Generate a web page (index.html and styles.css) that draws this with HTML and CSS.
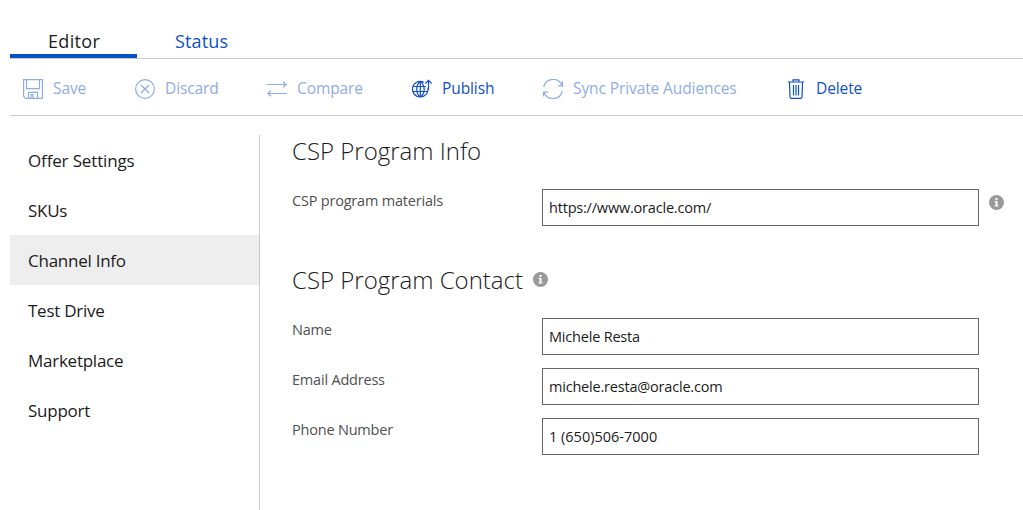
FILE: index.html
```html
<!DOCTYPE html>
<html lang="en">
<head>
<meta charset="utf-8">
<title>Channel Info</title>
<link rel="stylesheet" href="styles.css">
</head>
<body>
<div class="page">
  <nav class="tabs">
    <a class="tab tab-active"><span>Editor</span></a>
    <a class="tab"><span>Status</span></a>
  </nav>
  <div class="toolbar">
    <div class="tool disabled">
      <svg class="icon" viewBox="0 0 20 20"><path d="M.6.6h18.800v18.800H2.800L.6 17.200zM3.500.6v9h13v-9M5.500 19.400v-6h9v6M8 19v-3.500h2V19"/></svg>
      <span>Save</span>
    </div>
    <div class="tool disabled">
      <svg class="icon" viewBox="0 0 20 20"><circle cx="10" cy="10" r="9.400"/><path d="M6 6l8 8M14 6l-8 8"/></svg>
      <span>Discard</span>
    </div>
    <div class="tool disabled">
      <svg class="icon" viewBox="0 0 20 20"><path d="M0 5.500h19M16 2.800l3.200 2.700-3.200 2.700M20 14.500H1M4 11.800l-3.200 2.700 3.200 2.700"/></svg>
      <span>Compare</span>
    </div>
    <div class="tool">
      <svg class="icon" viewBox="0 0 20 20"><path d="M12 3.300A7.800 7.800 0 1 0 15.900 8.500M1 7.500H13.800M.7 12.500h15.200M8.300 2.500v15.600M8.300 2.500C3.500 6 3.500 14.600 8.300 18.100M8.300 2.500c1.900 1.200 3 2.800 3.500 5C12.800 12 11.300 16 8.300 18.100M16.500 11V1.500M13.300 4.500l3.200-3.200 3.200 3.200"/></svg>
      <span>Publish</span>
    </div>
    <div class="tool disabled">
      <svg class="icon" viewBox="0 0 20 20"><path d="M.7 8A9.600 9.600 0 0 1 19 6.500M19.400 2.500v4.300h-4.600M19.300 12A9.600 9.600 0 0 1 1 13.500M.6 17.500v-4.300h4.600"/></svg>
      <span>Sync Private Audiences</span>
    </div>
    <div class="tool delete">
      <svg class="icon" viewBox="0 0 20 20"><path d="M1 3h16M6 3V.8h6V3M2.500 3l.5 15q.1 1.300 1.300 1.300h9.400q1.200 0 1.300-1.300l.5-15M6.500 6v10.500M9 6v10.500M11.500 6v10.500"/></svg>
      <span>Delete</span>
    </div>
  </div>
  <div class="body">
    <nav class="side">
      <a class="offer">Offer Settings</a>
      <a>SKUs</a>
      <a class="selected">Channel Info</a>
      <a>Test Drive</a>
      <a>Marketplace</a>
      <a>Support</a>
    </nav>
    <main class="content">
      <h2>CSP Program Info</h2>
      <div class="row">
        <label for="materials">CSP program materials</label>
        <input id="materials" value="https://www.oracle.com/">
        <svg class="info" viewBox="0 0 15 15"><circle cx="7.500" cy="7.500" r="7.500"/><path d="M6.500 3h2v2h-2zM5.500 6h3v4.500h1v1h-4v-1h1V7h-1z"/></svg>
      </div>
      <h2 class="second"><span>CSP Program Contact</span>
        <svg class="info" viewBox="0 0 15 15"><circle cx="7.500" cy="7.500" r="7.500"/><path d="M6.500 3h2v2h-2zM5.500 6h3v4.500h1v1h-4v-1h1V7h-1z"/></svg>
      </h2>
      <div class="row">
        <label for="name">Name</label>
        <input id="name" value="Michele Resta">
      </div>
      <div class="row">
        <label for="email">Email Address</label>
        <input id="email" value="michele.resta@oracle.com">
      </div>
      <div class="row">
        <label for="phone">Phone Number</label>
        <input id="phone" class="phone" value="1 (650)506-7000">
      </div>
    </main>
  </div>
</div>
</body>
</html>
```
FILE: styles.css
```css
* { box-sizing: border-box; }
body {
  margin: 0;
  background: #fff;
  color: #1b1b1b;
  font-family: "Open Sans", "Noto Sans", sans-serif;
  overflow: hidden;
}
.page { height: 510px; padding: 24px 0 0 10px; display: flex; flex-direction: column; }
.tabs { display: flex; height: 35px; border-bottom: 1px solid #ccc; font-size: 18px; line-height: 34px; }
.tab { width: 127px; height: 34px; padding-left: 38px; color: #0f4fc8; letter-spacing: 0.150px; }
.tab-active { color: #1b1b1b; border-bottom: 4px solid #0451c4; }
.tab-active span { letter-spacing: 0.350px; }
.toolbar {
  display: grid;
  grid-template-columns: 112px 132px 145px 131px 244px 1fr;
  height: 57px;
  padding-left: 13px;
  align-items: center;
  border-bottom: 1px solid #ccc;
  font-size: 15.500px;
  letter-spacing: -0.100px;
}
.tool { display: flex; align-items: center; gap: 10px; height: 20px; color: #0f51c8; white-space: nowrap; margin-top: 4px; }
.tool span { margin-top: -2px; }
.disabled { color: #8fade5; }
.delete { gap: 9px; }
.icon { width: 20px; height: 20px; flex: none; fill: none; stroke: currentColor; stroke-width: 1.200; }
.body { display: flex; flex: 1; padding-top: 19px; min-height: 0; }
.side { width: 250px; border-right: 1px solid #ccc; font-size: 17px; }
.side a { display: block; height: 50px; line-height: 50px; padding: 1px 0 0 18px; letter-spacing: -0.250px; }
.side .offer { letter-spacing: -0.150px; }
.side .selected { background: #eee; }
.content { flex: 1; padding-left: 32px; }
h2 { display: flex; align-items: center; gap: 10px; height: 34px; margin: 0 0 20px; font-size: 24px; font-weight: 300; line-height: 32px; padding-bottom: 2px; white-space: nowrap; }
h2 .info { margin-bottom: 2px; }
.second { margin: 38px 0 20px; }
.row { display: flex; height: 37px; margin-bottom: 13px; }
.row label { width: 250px; font-size: 14.500px; line-height: 24px; color: #505050; white-space: nowrap; letter-spacing: -0.200px; }
.row input {
  width: 437px;
  height: 37px;
  padding: 0 6px;
  border: 1px solid #666;
  border-radius: 0;
  background: #fff;
  color: #1b1b1b;
  font: 14.500px "Open Sans", "Noto Sans", sans-serif;
  letter-spacing: -0.200px;
}
.row .phone { letter-spacing: 0; }
.info { width: 15px; height: 15px; flex: none; fill: #999; }
.info path { fill: #fff; }
.row .info { margin: 6px 0 0 10px; }
```
